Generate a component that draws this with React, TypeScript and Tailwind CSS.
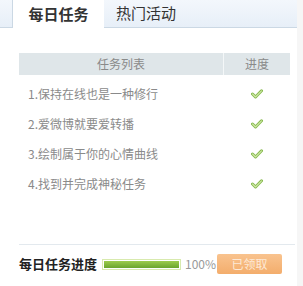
export default function App() {
  const tasks = [
    '1.保持在线也是一种修行',
    '2.爱微博就要爱转播',
    '3.绘制属于你的心情曲线',
    '4.找到并完成神秘任务',
  ];

  return (
    <div
      className="w-[303px] h-[286px] bg-[#f6f6f6] flex overflow-hidden"
      style={{ fontFamily: '"Noto Sans CJK SC", "Liberation Sans", sans-serif' }}
    >
      <div className="w-[297px] h-full bg-white flex flex-col">
        {/* Tabs */}
        <div className="h-[28px] flex pl-[12px] bg-gradient-to-b from-[#f3f7fc] to-[#e7eff8] border-b border-[#cbd8e4]">
          <div className="w-[92px] h-[28px] bg-white border-l border-[#cbd8e4] flex items-center justify-center text-[15px] font-bold text-[#333]">
            每日任务
          </div>
          <div className="w-[84px] flex items-center justify-center text-[15px] text-[#333]">
            热门活动
          </div>
        </div>

        {/* Task table */}
        <div className="mt-[25px] ml-[19px] w-[271px]">
          <div className="h-[22px] flex bg-[#dfe6e9] text-[12px] text-[#8a8a8a]">
            <div className="w-[205px] flex items-center justify-center border-r border-[#f4f7f8]">任务列表</div>
            <div className="flex-1 flex items-center justify-center">进度</div>
          </div>
          <div className="mt-[4px]">
            {tasks.map(t => (
              <div key={t} className="h-[30px] flex items-center text-[12px] text-[#8a8a8a]">
                <div className="w-[205px] pl-[9px]">{t}</div>
                <div className="flex-1 flex justify-center">
                  <svg width="12" height="10" viewBox="0 0 12 10">
                    <path d="M1.5 5 L4.5 8 L10.5 1.8" fill="none" stroke="#86b84e" strokeWidth="3" strokeLinecap="round" strokeLinejoin="round" />
                    <path d="M1.5 5 L4.5 8 L10.5 1.8" fill="none" stroke="#cfe9a6" strokeWidth="1.1" strokeLinecap="round" strokeLinejoin="round" />
                  </svg>
                </div>
              </div>
            ))}
          </div>
        </div>

        {/* Progress */}
        <div className="mt-auto mb-[12px] ml-[19px] w-[276px] border-t border-[#e3e9ee] pt-[9px] flex items-center">
          <div className="text-[13px] font-bold text-[#222] w-[83px]">每日任务进度</div>
          <div className="w-[79px] h-[11px] border border-[#d8eaae] p-px">
            <div className="h-full bg-gradient-to-b from-[#9ccc4c] to-[#6aa52c]" />
          </div>
          <div className="ml-[4px] text-[12px] text-[#999]">100%</div>
          <div className="ml-[1px] w-[65px] h-[20px] rounded-[2px] bg-gradient-to-b from-[#f9c38e] to-[#f3ad6c] flex items-center justify-center text-[12px] text-[#fde9d6]">
            已领取
          </div>
        </div>
      </div>
    </div>
  );
}
